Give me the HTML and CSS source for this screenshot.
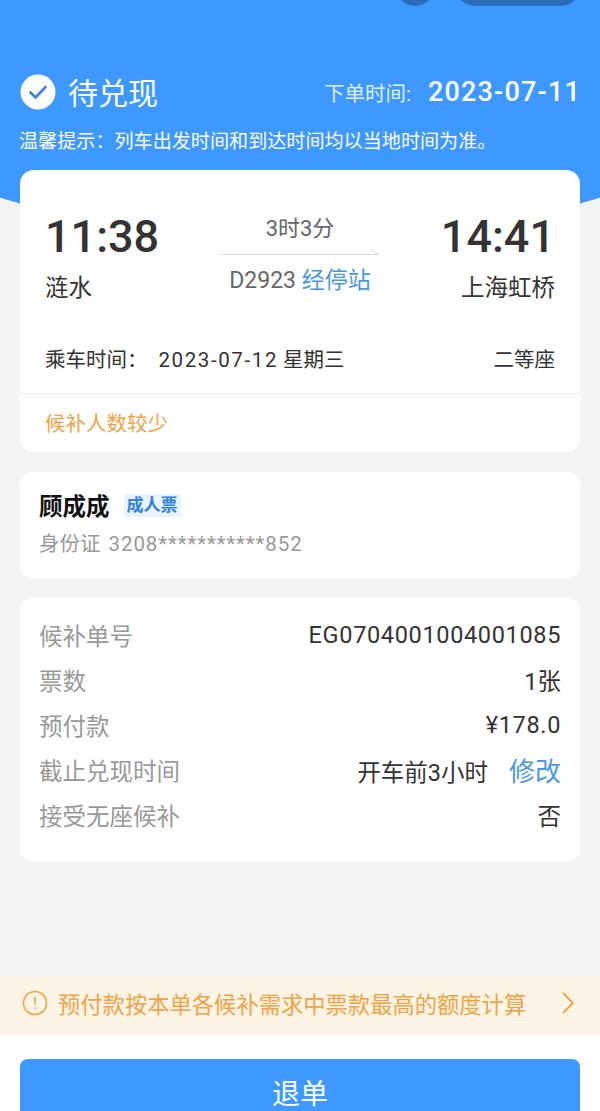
FILE: index.html
```html
<!DOCTYPE html>
<html lang="zh-CN">
<head>
    <meta charset="UTF-8">
    <meta name="viewport" content="width=device-width, initial-scale=1.0">
    <title>候补订单详情</title>
    <link rel="stylesheet" href="styles.css">
</head>
<body>
    <div id="page">
        <div id="hero-bg"></div>

        <div id="top-pills">
            <span class="pill-round"></span>
            <span class="pill-wide"></span>
        </div>

        <div id="status-row">
            <div class="status-left">
                <svg class="status-icon" viewBox="0 0 36 36">
                    <circle cx="18" cy="18" r="17.5" fill="#fff"/>
                    <path d="M10.5 18.5l5 5 10-10.500" fill="none" stroke="#3d84d8" stroke-width="2.600" stroke-linecap="round" stroke-linejoin="round"/>
                </svg>
                <span class="status-text">待兑现</span>
            </div>
            <div class="order-time">
                <span class="order-label">下单时间:</span>
                <span class="order-date">2023-07-11</span>
            </div>
        </div>
        <div id="tip">温馨提示<span class="colon">：</span>列车出发时间和到达时间均以当地时间为准。</div>

        <div class="card" id="train-card">
            <div class="train-main">
                <div class="station">
                    <div class="time">11:38</div>
                    <div class="station-name">涟水</div>
                </div>
                <div class="train-mid">
                    <div class="duration">3时3分</div>
                    <svg class="arrow" viewBox="0 0 158 8">
                        <path d="M0 6.500h157.500l-8-5" fill="none" stroke="#dcdcdc" stroke-width="1"/>
                    </svg>
                    <div class="train-no">D2923 <span class="link">经停站</span></div>
                </div>
                <div class="station station-end">
                    <div class="time">14:41</div>
                    <div class="station-name">上海虹桥</div>
                </div>
            </div>
            <div class="ride-row">
                <div>乘车时间<span class="colon">：</span><span class="ride-date">2023-07-12</span> 星期三</div>
                <div>二等座</div>
            </div>
            <div class="few-people">候补人数较少</div>
        </div>

        <div class="card" id="person-card">
            <div class="person-name">
                <b>顾成成</b>
                <span class="ticket-tag">成人票</span>
            </div>
            <div class="person-id">身份证 <span class="id-no">3208***********852</span></div>
        </div>

        <div class="card" id="info-card">
            <div class="info-row">
                <span class="info-label">候补单号</span>
                <span class="num">EG0704001004001085</span>
            </div>
            <div class="info-row">
                <span class="info-label">票数</span>
                <span>1张</span>
            </div>
            <div class="info-row">
                <span class="info-label">预付款</span>
                <span class="num">¥178.0</span>
            </div>
            <div class="info-row">
                <span class="info-label">截止兑现时间</span>
                <span>开车前3小时<span class="link edit-link">修改</span></span>
            </div>
            <div class="info-row">
                <span class="info-label">接受无座候补</span>
                <span>否</span>
            </div>
        </div>

        <div id="notice">
            <svg class="notice-icon" viewBox="0 0 26 26">
                <circle cx="13" cy="13" r="11.500" fill="none" stroke="#f0a345" stroke-width="1.600"/>
                <path d="M13 7v8M13 17.500v1.500" fill="none" stroke="#f0a345" stroke-width="1.600"/>
            </svg>
            <span class="notice-text">预付款按本单各候补需求中票款最高的额度计算</span>
            <svg class="notice-arrow" viewBox="0 0 14 22">
                <path d="M2 1l10 10-10 10" fill="none" stroke="#f0a345" stroke-width="1.800"/>
            </svg>
        </div>

        <div id="bottom-bar">
            <button id="cancel-btn">退单</button>
        </div>
    </div>
</body>
</html>
```

FILE: styles.css
```css
html, body {
    margin: 0;
    padding: 0;
}

body {
    width: 600px;
    height: 1111px;
    overflow: hidden;
    background-color: #f4f4f4;
    font-family: Roboto, "Noto Sans CJK SC", sans-serif;
    color: #333;
}

.link {
    color: #4a98e0;
}

/* 繁体字形的全角冒号是居中的，和原图一致 */
.colon {
    font-family: "Noto Sans CJK TC", sans-serif;
}

#page {
    position: relative;
    height: 1111px;
    display: flex;
    flex-direction: column;
    overflow: hidden;
}

/* 顶部蓝色弧形背景 */
#hero-bg {
    position: absolute;
    top: 41px;
    left: -80px;
    width: 760px;
    height: 194px;
    border-radius: 50%;
    background-color: #3d98ff;
}

#hero-bg::before {
    content: "";
    position: absolute;
    top: -41px;
    left: 0;
    width: 100%;
    height: 140px;
    background-color: #3d98ff;
}

#top-pills, #status-row, #tip, .card {
    position: relative;
}

#top-pills {
    height: 6px;
    display: flex;
    justify-content: flex-end;
    align-items: flex-end;
    gap: 22px;
    padding-right: 20px;
}

.pill-round {
    flex: none;
    width: 38px;
    height: 38px;
    background-color: #2a6db8;
    border-radius: 50%;
}

.pill-wide {
    flex: none;
    width: 124px;
    height: 38px;
    background-color: #2a6db8;
    border-radius: 19px;
}

#status-row {
    margin-top: 68px;
    height: 36px;
    padding: 0 19px 0 20px;
    display: flex;
    justify-content: space-between;
    align-items: center;
    color: #fff;
}

.status-left, .order-time {
    display: flex;
    align-items: center;
}

.status-icon {
    width: 36px;
    height: 36px;
}

.status-text {
    margin: 0 0 3px 12px;
    font-size: 30px;
}

.order-label {
    font-size: 20.500px;
    opacity: 0.85;
}

.order-date {
    margin-left: 17px;
    font-size: 27px;
    font-weight: 500;
    letter-spacing: 1.200px;
}

#tip {
    margin: 17px 0 0 19px;
    font-size: 19.100px;
    line-height: 26px;
    color: #fff;
}

.card {
    margin: 0 20px;
    background-color: #fff;
    border-radius: 14px;
}

#train-card {
    margin-top: 15px;
    height: 282px;
    display: flex;
    flex-direction: column;
}

.train-main {
    height: 149px;
    padding: 0 25px;
    display: flex;
    justify-content: space-between;
}

.time {
    margin-top: 40px;
    font-size: 45px;
    line-height: 54px;
    font-weight: 500;
    color: #333;
}

.station-name {
    margin-top: 8px;
    font-size: 23.500px;
    line-height: 32px;
}

.station-end {
    text-align: right;
}

.train-mid {
    width: 158px;
    margin-top: 44px;
    text-align: center;
}

.duration {
    font-size: 22px;
    line-height: 30px;
    color: #666;
}

.arrow {
    display: block;
    width: 158px;
    height: 8px;
    margin-top: 4px;
}

.train-no {
    margin-top: 9px;
    font-size: 23px;
    line-height: 32px;
    color: #666;
}

.ride-row {
    height: 75px;
    padding: 4px 25px 0;
    box-sizing: border-box;
    display: flex;
    justify-content: space-between;
    align-items: center;
    font-size: 20.500px;
    border-bottom: 1px solid #ececec;
}

.ride-date {
    margin-left: 11px;
    letter-spacing: 1.600px;
}

.few-people {
    flex: 1;
    padding: 0 0 2px 25px;
    display: flex;
    align-items: center;
    font-size: 20.500px;
    color: #f0a345;
}

#person-card {
    margin-top: 20px;
    height: 106px;
    padding: 17px 19px 0;
    box-sizing: border-box;
}

.person-name {
    display: flex;
    align-items: center;
    height: 32px;
}

.person-name b {
    font-size: 23.500px;
    color: #111;
}

.ticket-tag {
    margin-left: 14px;
    padding: 0 3px;
    font-size: 17px;
    line-height: 23px;
    font-weight: 700;
    color: #2d80e0;
    background-color: #e8f3fe;
}

.person-id {
    margin-top: 8px;
    font-size: 20.500px;
    line-height: 30px;
    color: #999;
}

.id-no {
    margin-left: 3px;
    letter-spacing: 0.900px;
}

#info-card {
    margin-top: 20px;
    height: 264px;
    padding: 14px 19px 0;
    box-sizing: border-box;
}

.info-row {
    height: 45px;
    display: flex;
    justify-content: space-between;
    align-items: center;
    font-size: 23.500px;
}

.info-label {
    color: #999;
}

.num {
    letter-spacing: 0.650px;
}

.edit-link {
    margin-left: 21px;
    font-size: 26px;
}

#notice {
    margin-top: auto;
    height: 58px;
    padding: 0 22px 4px;
    box-sizing: border-box;
    display: flex;
    align-items: center;
    background-color: #fef4e6;
}

.notice-icon {
    width: 26px;
    height: 26px;
}

.notice-text {
    margin-left: 10px;
    font-size: 22.300px;
    color: #f0a345;
}

.notice-arrow {
    margin-left: auto;
    margin-right: 3px;
    width: 14px;
    height: 22px;
}

#bottom-bar {
    height: 77px;
    padding: 25px 20px 0;
    box-sizing: border-box;
    background-color: #fff;
}

#cancel-btn {
    display: block;
    width: 100%;
    height: 60px;
    border: none;
    border-radius: 8px;
    background-color: #3d98ff;
    color: #fff;
    font-family: inherit;
    font-size: 28px;
    padding: 5px 0 0;
}
```
